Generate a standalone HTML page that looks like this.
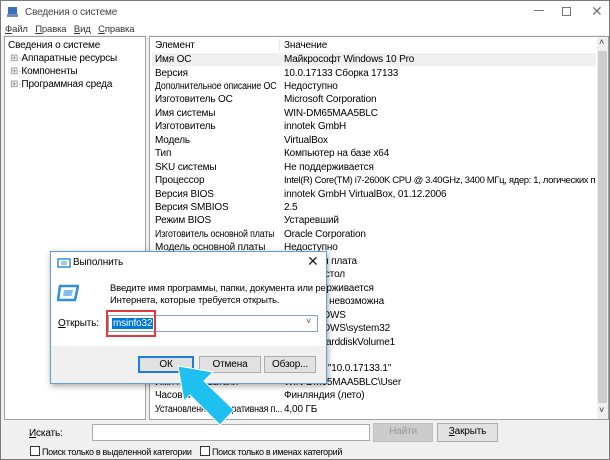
<!DOCTYPE html>
<html><head><meta charset="utf-8"><style>
*{box-sizing:border-box;margin:0;padding:0}
body{width:610px;height:460px;overflow:hidden;background:#f0f0f0;font-family:"Liberation Sans",sans-serif;font-size:10px;letter-spacing:-0.15px;color:#000;position:relative}
.a{position:absolute;white-space:nowrap}
#win{position:absolute;left:0;top:0;width:610px;height:460px;border:1px solid #7a7a7a;background:#f0f0f0;overflow:hidden}
#title{position:absolute;left:0;top:0;width:608px;height:34px;background:#fff}
#left{position:absolute;left:3px;top:35px;width:142px;height:384px;background:#fff;border:1px solid #a0a0a0}
#right{position:absolute;left:148px;top:35px;width:460px;height:384px;background:#fff;border:1px solid #a0a0a0;overflow:hidden}
.row{position:absolute;left:2px;height:13.45px;line-height:13.45px;width:444px;overflow:hidden}
.row span{position:absolute;white-space:nowrap}
.row .k{left:3px}.row .v{left:132px}
.btn{position:absolute;background:#e1e1e1;border:1px solid #adadad;text-align:center;line-height:16px}
.cb{display:inline-block;width:10px;height:10px;border:1px solid #333;background:#fff;vertical-align:-1px;margin-right:2px}
.row .t{transform:scaleX(.88);transform-origin:left center}
</style></head><body>
<div id="win">
<div id="title">
 <svg class="a" style="left:6px;top:6px" width="12" height="11"><rect x="1" y="0" width="9" height="7" fill="#3b6fb6"/><rect x="0" y="7" width="11" height="3" fill="#6b8fc0"/></svg>
 <div class="a" style="left:24px;top:6px;color:#444">Сведения о системе</div>
 <div class="a" style="left:533px;top:9px;width:10px;height:1px;background:#777"></div>
 <div class="a" style="left:561px;top:6px;width:9px;height:9px;border:1px solid #777"></div>
 <div class="a" style="left:590px;top:2px;color:#777;font-size:14px">✕</div>
</div>
<div class="a" style="left:4px;top:23px;color:#333;font-size:9.5px"><u>Ф</u>айл&nbsp;&nbsp; <u>П</u>равка&nbsp;&nbsp; <u>В</u>ид&nbsp;&nbsp; <u>С</u>правка</div>
<div id="left">
 <div class="a" style="left:3px;top:3px">Сведения о системе</div>
 <div class="a" style="left:5px;top:16px;color:#888">⊞·<span style="color:#000">Аппаратные ресурсы</span></div>
 <div class="a" style="left:5px;top:29px;color:#888">⊞·<span style="color:#000">Компоненты</span></div>
 <div class="a" style="left:5px;top:42px;color:#888">⊞·<span style="color:#000">Программная среда</span></div>
</div>
<div id="right">
 <div class="a" style="left:129px;top:2px;width:1px;height:12px;background:#e5e5e5"></div>
 <div class="row" style="top:2px"><span class="k">Элемент</span><span class="v">Значение</span></div>
 <div class="row" style="top:16px;background:#f0f0f0"><span class="k">Имя ОС</span><span class="v">Майкрософт Windows 10 Pro</span></div>
 <div class="row" style="top:29.5px"><span class="k">Версия</span><span class="v">10.0.17133 Сборка 17133</span></div>
 <div class="row" style="top:42.9px"><span class="k t">Дополнительное описание ОС</span><span class="v">Недоступно</span></div>
 <div class="row" style="top:56.4px"><span class="k">Изготовитель ОС</span><span class="v">Microsoft Corporation</span></div>
 <div class="row" style="top:69.8px"><span class="k">Имя системы</span><span class="v">WIN-DM65MAA5BLC</span></div>
 <div class="row" style="top:83.3px"><span class="k">Изготовитель</span><span class="v">innotek GmbH</span></div>
 <div class="row" style="top:96.7px"><span class="k">Модель</span><span class="v">VirtualBox</span></div>
 <div class="row" style="top:110.2px"><span class="k">Тип</span><span class="v">Компьютер на базе x64</span></div>
 <div class="row" style="top:123.6px"><span class="k">SKU системы</span><span class="v">Не поддерживается</span></div>
 <div class="row" style="top:137.1px"><span class="k">Процессор</span><span class="v" style="letter-spacing:-0.35px;font-size:9.5px">Intel(R) Core(TM) i7-2600K CPU @ 3.40GHz, 3400 МГц, ядер: 1, логических п...</span></div>
 <div class="row" style="top:150.5px"><span class="k">Версия BIOS</span><span class="v">innotek GmbH VirtualBox, 01.12.2006</span></div>
 <div class="row" style="top:164px"><span class="k">Версия SMBIOS</span><span class="v">2.5</span></div>
 <div class="row" style="top:177.4px"><span class="k">Режим BIOS</span><span class="v">Устаревший</span></div>
 <div class="row" style="top:190.9px"><span class="k t">Изготовитель основной платы</span><span class="v">Oracle Corporation</span></div>
 <div class="row" style="top:204.3px"><span class="k">Модель основной платы</span><span class="v">Недоступно</span></div>
 <div class="row" style="top:217.8px"><span class="k">Версия основной платы</span><span class="v">Основная плата</span></div>
 <div class="row" style="top:231.2px"><span class="k">Роль платформы</span><span class="v">Рабочий стол</span></div>
 <div class="row" style="top:244.7px"><span class="k">Состояние безоп. загрузки</span><span class="v">Не поддерживается</span></div>
 <div class="row" style="top:258.1px"><span class="k">Конфигурация PCR7</span><span class="v">Привязка невозможна</span></div>
 <div class="row" style="top:271.6px"><span class="k">Папка Windows</span><span class="v">C:\WINDOWS</span></div>
 <div class="row" style="top:285px"><span class="k">Системная папка</span><span class="v">C:\WINDOWS\system32</span></div>
 <div class="row" style="top:298.5px"><span class="k">Устройство загрузки</span><span class="v">\Device\HarddiskVolume1</span></div>
 <div class="row" style="top:311.9px"><span class="k">Язык системы</span><span class="v">Россия</span></div>
 <div class="row" style="top:325.4px"><span class="k t">Аппаратно-зависимый уровень</span><span class="v">Версия = "10.0.17133.1"</span></div>
 <div class="row" style="top:338.8px"><span class="k">Имя пользователя</span><span class="v">WIN-DM65MAA5BLC\User</span></div>
 <div class="row" style="top:352.3px"><span class="k">Часовой пояс</span><span class="v">Финляндия (лето)</span></div>
 <div class="row" style="top:365.7px"><span class="k t">Установленная оперативная п...</span><span class="v">4,00 ГБ</span></div>
 <div class="a" style="left:447px;top:0;width:11px;height:382px;background:#f0f0f0"></div>
 <div class="a" style="left:449px;top:0;font-size:9px;color:#333">˄</div>
 <div class="a" style="left:448px;top:14px;width:9px;height:352px;background:#cdcdcd"></div>
 <div class="a" style="left:449px;top:368px;font-size:9px;color:#333">˅</div>
</div>
<div class="a" style="left:28px;top:427px"><u>И</u>скать:</div>
<div class="a" style="left:91px;top:423px;width:278px;height:17px;background:#fff;border:1px solid #a9a9a9"></div>
<div class="btn" style="left:372px;top:422px;width:60px;height:19px;color:#999;background:#ccc;border-color:#bfbfbf">Найти</div>
<div class="btn" style="left:436px;top:422px;width:61px;height:19px"><u>З</u>акрыть</div>
<div class="a" style="left:29px;top:445px;font-size:9px;letter-spacing:-0.3px"><span class="cb"></span>Поиск только в выделенной категории</div>
<div class="a" style="left:199px;top:445px;font-size:9px;letter-spacing:-0.3px"><span class="cb"></span>Поиск только в именах категорий</div>
</div>

<div class="a" style="left:50px;top:251px;width:277px;height:133px;background:#fff;border:1px solid #5c9fd6;box-shadow:1px 2px 6px rgba(0,0,0,.35);overflow:hidden">
 <svg class="a" style="left:6px;top:6px" width="14" height="10"><rect x="1" y="1" width="12" height="8" fill="none" stroke="#3a8ed8" stroke-width="1.5"/><rect x="4" y="3" width="6" height="4" fill="#9cc9ef"/></svg>
 <div class="a" style="left:22px;top:5px">Выполнить</div>
 <div class="a" style="left:256px;top:1px;font-size:14px;color:#222">✕</div>
 <svg class="a" style="left:6px;top:31px" width="22" height="20"><path d="M3 3h18l-3 14H1z" fill="none" stroke="#2f8fe0" stroke-width="2.5"/><path d="M7 7h9l-1.5 6H6z" fill="#7fc0f2"/></svg>
 <div class="a" style="left:59px;top:31px;line-height:12px;font-size:9.5px">Введите имя программы, папки, документа или ресурса<br>Интернета, которые требуется открыть.</div>
 <div class="a" style="left:7px;top:66px"><u>О</u>ткрыть:</div>
 <div class="a" style="left:57px;top:63px;width:210px;height:17px;border:1px solid #7aa7d6;background:#fff"><span class="a" style="left:3px;top:2px;background:#0078d7;color:#fff;padding:0 1px">msinfo32</span><span class="a" style="left:197px;top:0;color:#555;font-size:9px">˅</span></div>
 <div class="a" style="left:55px;top:58px;width:50px;height:27px;border:2px solid #e23a3a"></div>
 <div class="a" style="left:0;top:94px;width:275px;height:38px;background:#f0f0f0"></div>
 <div class="btn" style="left:87px;top:104px;width:56px;height:17px;border:2px solid #1a7be0;line-height:13px">ОК</div>
 <div class="btn" style="left:148px;top:104px;width:62px;height:17px;line-height:15px">Отмена</div>
 <div class="btn" style="left:213px;top:104px;width:52px;height:17px;line-height:15px">Обзор...</div>
</div>
<svg class="a" style="left:0;top:0" width="610" height="460"><polygon points="178,366 213,372 204,381 234,410 220,425 190,395 184,401" fill="#1ec0ef" stroke="#fff" stroke-width="1"/></svg>
</body></html>
